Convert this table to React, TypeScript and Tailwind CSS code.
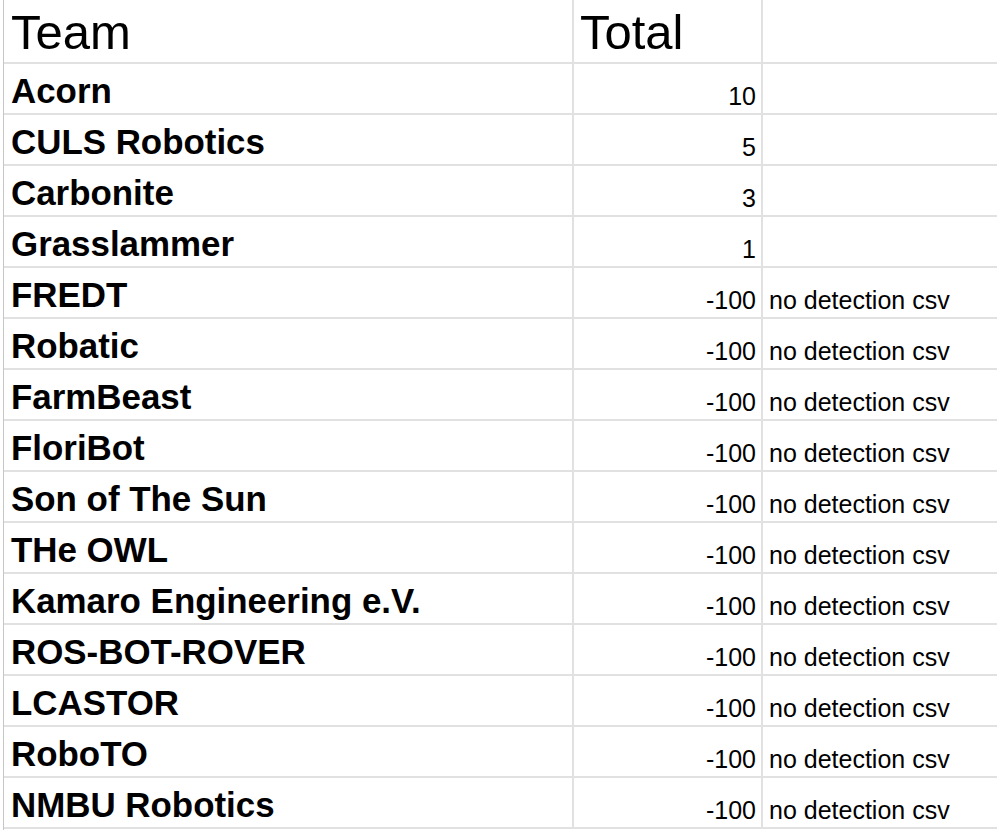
const rows: { team: string; total: number; note?: string }[] = [
  { team: 'Acorn', total: 10 },
  { team: 'CULS Robotics', total: 5 },
  { team: 'Carbonite', total: 3 },
  { team: 'Grasslammer', total: 1 },
  { team: 'FREDT', total: -100, note: 'no detection csv' },
  { team: 'Robatic', total: -100, note: 'no detection csv' },
  { team: 'FarmBeast', total: -100, note: 'no detection csv' },
  { team: 'FloriBot', total: -100, note: 'no detection csv' },
  { team: 'Son of The Sun', total: -100, note: 'no detection csv' },
  { team: 'THe OWL', total: -100, note: 'no detection csv' },
  { team: 'Kamaro Engineering e.V.', total: -100, note: 'no detection csv' },
  { team: 'ROS-BOT-ROVER', total: -100, note: 'no detection csv' },
  { team: 'LCASTOR', total: -100, note: 'no detection csv' },
  { team: 'RoboTO', total: -100, note: 'no detection csv' },
  { team: 'NMBU Robotics', total: -100, note: 'no detection csv' },
]

export default function App() {
  return (
    <div className="w-[997px] h-[830px] overflow-hidden bg-white pl-[3px] text-black font-['Liberation_Sans',Arial,sans-serif]">
      <div className="border-l border-[#c6c6c6] h-full">
        <div className="flex h-[64px] border-b-2 border-[#e1e1e1]">
          <div className="w-[570px] border-r-2 border-[#e1e1e1] flex items-end pl-[7px] pb-[5px] text-[49px] leading-none">
            Team
          </div>
          <div className="w-[189px] border-r-2 border-[#e1e1e1] flex items-end pl-[6px] pb-[5px] text-[49px] leading-none">
            Total
          </div>
          <div className="flex-1" />
        </div>

        {rows.map(row => (
          <div key={row.team} className="flex h-[51px] border-b-2 border-[#e1e1e1]">
            <div className="w-[570px] border-r-2 border-[#e1e1e1] flex items-end pl-[7px] pb-[4px] text-[34.9px] font-bold leading-none whitespace-nowrap">
              {row.team}
            </div>
            <div className="w-[189px] border-r-2 border-[#e1e1e1] flex items-end justify-end pr-[5px] pb-[4px] text-[25px] leading-none">
              {row.total}
            </div>
            <div className="flex-1 flex items-end pl-[6px] pb-[4px] text-[25px] leading-none whitespace-nowrap">
              {row.note}
            </div>
          </div>
        ))}
      </div>
    </div>
  )
}
